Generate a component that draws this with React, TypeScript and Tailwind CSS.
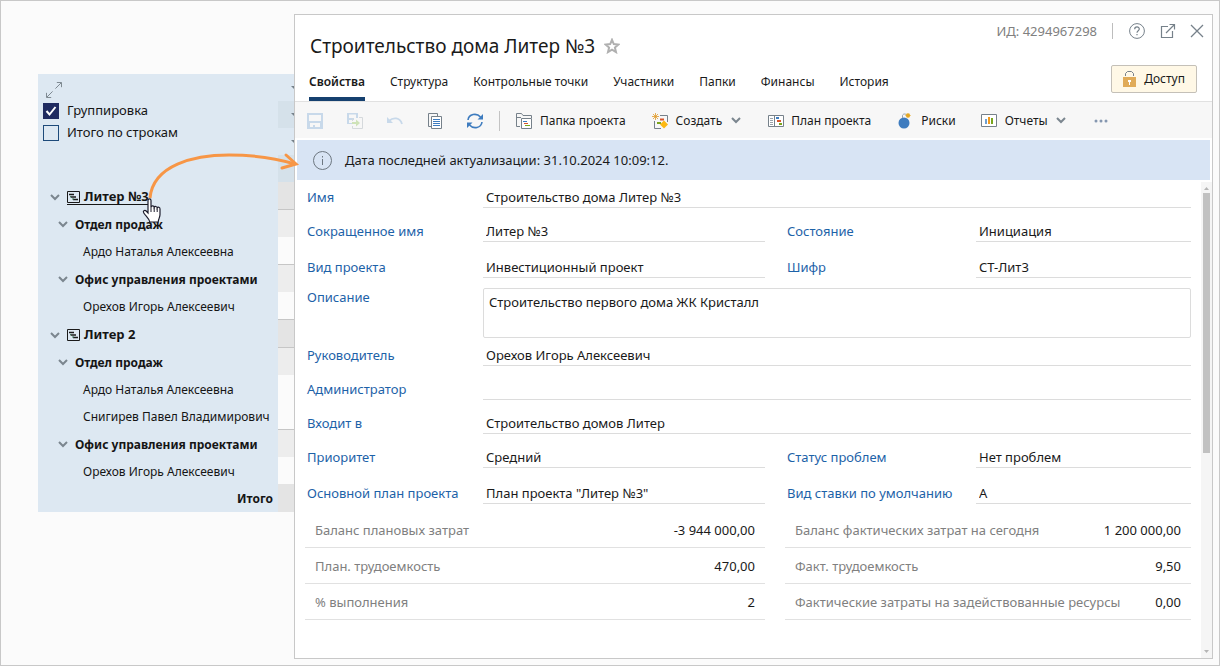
import React, { useId, useState } from "react";
import clsx from "clsx";

interface TreeRow {
  label: string;
  kind: "project" | "dept" | "person" | "total";
  active?: boolean;
  line?: boolean;
}

interface FieldProps {
  label: string;
  value: string;
  wide?: boolean;
  right?: boolean;
}

const treeRows: TreeRow[] = [
  { label: "Литер №3", kind: "project", active: true, line: true },
  { label: "Отдел продаж", kind: "dept" },
  { label: "Ардо Наталья Алексеевна", kind: "person", line: true },
  { label: "Офис управления проектами", kind: "dept" },
  { label: "Орехов Игорь Алексеевич", kind: "person", line: true },
  { label: "Литер 2", kind: "project", line: true },
  { label: "Отдел продаж", kind: "dept" },
  { label: "Ардо Наталья Алексеевна", kind: "person" },
  { label: "Снигирев Павел Владимирович", kind: "person", line: true },
  { label: "Офис управления проектами", kind: "dept" },
  { label: "Орехов Игорь Алексеевич", kind: "person" },
  { label: "Итого", kind: "total" },
];

const tabs = [
  "Свойства",
  "Структура",
  "Контрольные точки",
  "Участники",
  "Папки",
  "Финансы",
  "История",
];

const planMetrics = [
  ["Баланс плановых затрат", "-3 944 000,00"],
  ["План. трудоемкость", "470,00"],
  ["% выполнения", "2"],
];

const factMetrics = [
  ["Баланс фактических затрат на сегодня", "1 200 000,00"],
  ["Факт. трудоемкость", "9,50"],
  ["Фактические затраты на задействованные ресурсы", "0,00"],
];

const cellColor = {
  project: "bg-[#e4e4e4]",
  dept: "bg-[#ededed]",
  person: "bg-[#fbfbfb]",
  total: "bg-[#e4e4e4]",
};

const Chevron = () => (
  <svg width="10" height="7" viewBox="0 0 10 7" fill="none" className="shrink-0">
    <path d="M1 1l4 4 4-4" stroke="#7b868f" strokeWidth="2" />
  </svg>
);

const ProjectIcon = () => (
  <svg width="13" height="12" viewBox="0 0 13 12" fill="none" className="shrink-0">
    <path d="M.5.5h12v11H.5z" stroke="#1a1a1a" />
    <path d="M2 3.5h5M4 6h5M6 8.5h5" stroke="#1a1a1a" strokeWidth="1.6" />
    <path d="M3.5 5v1.500M6 7v2" stroke="#3f7d5c" />
  </svg>
);

const Check = ({ label, initial }: { label: string; initial: boolean }) => {
  const [on, setOn] = useState(initial);

  return (
    <label className="flex h-[22px] items-center gap-2">
      <span className="relative size-4">
        <input
          type="checkbox"
          checked={on}
          onChange={() => setOn(!on)}
          className="block size-4 appearance-none border border-[#1d4a7a] checked:border-[#1f2b60] checked:bg-[#1f2b60]"
        />
        {on && (
          <svg viewBox="0 0 16 16" fill="none" className="pointer-events-none absolute inset-0">
            <path d="M3.5 8l3 3.5 6-7.5" stroke="#fff" strokeWidth="2" />
          </svg>
        )}
      </span>
      {label}
    </label>
  );
};

const Tree = () => (
  <aside className="w-64 shrink-0 text-[12px] text-[#151515]">
    <div className="flex h-[108px]">
      <div className="w-60 bg-[#dde8f2] pt-2 pl-[5px] text-[13px]">
        <button className="mb-0.5 block pl-[3px]" aria-label="Развернуть">
          <svg width="16" height="16" viewBox="0 0 17 17" fill="none" stroke="#76818a">
            <path d="M10 7l6-6M11.5.5h5v5M7 10l-6 6M.5 11.5v5h5" />
          </svg>
        </button>
        <Check label="Группировка" initial={true} />
        <Check label="Итого по строкам" initial={false} />
      </div>
      <div className="w-4">
        {[0, 1, 2, 3].map((i) => (
          <div
            key={i}
            className={clsx(
              "flex h-[27px] items-center justify-end",
              i % 2 ? "bg-[#d5e1ea]" : "bg-[#dde8f2]"
            )}
          >
            {i < 3 && (
              <svg width="3" height="4" viewBox="0 0 3 4">
                <path d="M0 0h3v3z" fill="#76818a" />
              </svg>
            )}
          </div>
        ))}
      </div>
    </div>
    <ul>
      {treeRows.map((row, i) => (
        <li
          key={i}
          className={clsx(
            "flex whitespace-nowrap",
            row.line || row.kind === "total" ? "h-7" : "h-[27px]"
          )}
        >
          <div
            className={clsx(
              "flex w-60 items-center bg-[#dde8f2] pt-0.5",
              row.kind === "project" && "gap-[7px] pl-3 text-[13px] font-bold",
              row.kind === "dept" && "gap-[7px] pl-5 font-bold",
              row.kind === "person" && "pl-[45px]",
              row.kind === "total" && "justify-end pr-[5px] font-bold"
            )}
          >
            {(row.kind === "project" || row.kind === "dept") && <Chevron />}
            {row.kind === "project" ? (
              <a
                href="#"
                className={clsx(
                  "flex h-4 items-center gap-1",
                  row.active && "border-b border-[#151515]"
                )}
              >
                <ProjectIcon />
                {row.label}
              </a>
            ) : (
              <span>{row.label}</span>
            )}
          </div>
          <div
            className={clsx("w-4", cellColor[row.kind], row.line && "border-b border-[#c6c6c6]")}
          />
        </li>
      ))}
    </ul>
  </aside>
);

const Header = () => {
  const [tab, setTab] = useState(tabs[0]);

  return (
    <header className="flex h-[87px] justify-between border-b border-[#e1e1e1] pr-2 pl-[14px]">
      <div className="flex flex-col justify-end whitespace-nowrap">
        <div className="flex h-[30px] items-center gap-[9px] pl-px">
          <h1 className="text-[19px] text-[#1a1a1a]">Строительство дома Литер №3</h1>
          <button aria-label="В избранное">
            <svg width="16" height="16" viewBox="0 0 16 16" fill="none">
              <path
                d="M8 1.8l1.8 4.3 4.6.4-3.5 3 1.1 4.6L8 11.7l-4 2.4 1.1-4.6-3.5-3 4.6-.4z"
                stroke="#b0b0b0"
                strokeWidth="2"
              />
            </svg>
          </button>
        </div>
        <nav className="flex h-10 gap-[25px] text-[12px] text-[#1a1a1a]">
          {tabs.map((t) => (
            <button
              key={t}
              onClick={() => setTab(t)}
              className={clsx(
                "border-b-4 pt-1.5",
                t === tab ? "border-[#15406f] font-semibold" : "border-transparent"
              )}
            >
              {t}
            </button>
          ))}
        </nav>
      </div>
      <div className="flex flex-col items-end">
        <div className="flex h-[31px] items-center text-[13px] whitespace-nowrap text-[#808080]">
          <span className="border-r border-[#bdbdbd] pr-[15px] leading-4">ИД: 4294967298</span>
          <button className="ml-4" aria-label="Справка">
            <svg width="16" height="16" viewBox="0 0 16 16" fill="none" stroke="#76818a">
              <circle cx="8" cy="8" r="7.4" />
              <path d="M5.7 6.2c0-3 4.6-3 4.6-.1 0 1.7-2.3 1.7-2.3 3.6M8 10.9v1.3" strokeWidth="1.2" />
            </svg>
          </button>
          <button className="ml-[15px]" aria-label="Открыть в новом окне">
            <svg width="16" height="16" viewBox="0 0 16 16" fill="none" stroke="#76818a">
              <path d="M8 3.5H1.5v11h11V8M6 10l8.5-8.5M9.5 1.5h5v5" strokeWidth="1.2" />
            </svg>
          </button>
          <button className="ml-[14px]" aria-label="Закрыть">
            <svg width="14" height="14" viewBox="0 0 14 14" stroke="#76818a" strokeWidth="1.3">
              <path d="M1 1l12 12M13 1L1 13" />
            </svg>
          </button>
        </div>
        <button className="mt-[19px] mr-[7px] flex h-7 items-center gap-2 rounded-xs border border-[#c4c0b8] bg-[#fff8e6] px-[11px] text-[12px] text-[#1a1a1a]">
          <svg width="13" height="16" viewBox="0 0 13 16" fill="none">
            <path d="M2.5 5V2.5l2-2h4l2 2V5" stroke="#76818a" />
            <path d="M0 6h13v10H0z" fill="#e0ab58" />
            <path d="M5 9h3v2H7v3H6v-3H5z" fill="#fff" />
          </svg>
          Доступ
        </button>
      </div>
    </header>
  );
};

const Toolbar = () => (
  <div className="flex h-9 items-center bg-[#f7f7f7] pt-px pl-3 text-[12px] whitespace-nowrap text-[#1a1a1a]">
    <button aria-label="Сохранить">
      <svg width="16" height="16" viewBox="0 0 16 16">
        <path d="M0 0h16v16H0zM2 2v6h12V2zM3 10v4h3v-2h2v2h5v-4z" fill="#c8d9ea" fillRule="evenodd" />
      </svg>
    </button>
    <button className="ml-6" aria-label="Сохранить и закрыть">
      <svg width="16" height="16" viewBox="0 0 16 16" fill="none">
        <path d="M0 0h11v5H9V1.5H2V5h5v2H2v3h3v1H0z" fill="#c8d9ea" />
        <path d="M12 4.5h3.5v11h-10V13M5.5 8V5.5" stroke="#d5d9dc" />
        <path d="M5 9h4V6.5l4 3.5-4 3.5V11H5z" fill="#cfe3b8" />
      </svg>
    </button>
    <button className="ml-6" aria-label="Отменить">
      <svg width="16" height="16" viewBox="0 0 16 16" fill="none">
        <path d="M2 8c4-4 11-4 13 3" stroke="#c8d9ea" strokeWidth="1.8" />
        <path d="M0 4v6h6z" fill="#c8d9ea" />
      </svg>
    </button>
    <button className="ml-6" aria-label="Копировать">
      <svg width="16" height="16" viewBox="0 0 16 16" fill="none">
        <path d="M4 13.5H1.5V.5h9V3" stroke="#76818a" />
        <path d="M4.5 3.5h10v12h-10z" stroke="#76818a" fill="#fff" />
        <path d="M6 6.5h7M6 8.5h7M6 10.5h7M6 12.5h7" stroke="#3e7cbf" />
      </svg>
    </button>
    <button className="ml-6" aria-label="Обновить">
      <svg width="16" height="16" viewBox="0 0 16 16" fill="none">
        <path d="M1 7C1.8 1 9.5-.5 13.5 4M15 9c-.8 6-8.5 7.5-12.5 3" stroke="#3e7cbf" strokeWidth="1.6" />
        <path d="M16 1v5.5h-5.500zM0 15V9.500h5.500z" fill="#3e7cbf" />
      </svg>
    </button>
    <span className="ml-4 h-5 w-px bg-[#c3c3c3]" />
    <button className="ml-4 flex items-center gap-[7px]">
      <svg width="17" height="16" viewBox="0 0 17 16" fill="none">
        <path d="M4 13.5H.5V.5h5l1.5 2h8.5V5M.5 4.5H5" stroke="#76818a" />
        <path d="M5.5 5.5h10v10h-10z" stroke="#76818a" fill="#fff" />
        <path d="M7 8.5h4" stroke="#3e7cbf" />
        <path d="M8 10.5h4" stroke="#d9542b" />
        <path d="M9 12.5h5" stroke="#7aa51d" />
      </svg>
      Папка проекта
    </button>
    <button className="ml-[26px] flex items-center gap-[7px]">
      <svg width="17" height="16" viewBox="0 0 17 16" fill="none">
        <path d="M8 2.5h7.500V9M2.500 8v7.500H9" stroke="#76818a" />
        <path d="M3.5 0v7M0 3.5h7M1 1l5 5M6 1L1 6" stroke="#e09a2b" strokeWidth=".8" />
        <path d="M8 6.5h4" stroke="#d9542b" strokeWidth="2" />
        <path d="M5 10h4" stroke="#7aa51d" strokeWidth="2" />
        <path d="M12 7.500l4 4-4 4-4-4z" fill="#fdb913" />
      </svg>
      Создать
      <span className="pl-0.5">
        <Chevron />
      </span>
    </button>
    <button className="ml-[27px] flex items-center gap-[7px]">
      <svg width="16" height="14" viewBox="0 0 16 14" fill="none">
        <path d="M.5 1.5h15v11H.5zM6.500 1.500v11" stroke="#76818a" fill="#fff" />
        <path d="M2 4.500h3M2 6.500h3M2 8.500h3M2 10.500h3" stroke="#9aa3aa" />
        <path d="M8 4h3" stroke="#3e7cbf" strokeWidth="2" />
        <path d="M9 7h4" stroke="#d9542b" strokeWidth="2" />
        <path d="M11 10h3" stroke="#7aa51d" strokeWidth="2" />
      </svg>
      План проекта
    </button>
    <button className="ml-[27px] flex items-center gap-2">
      <svg width="15" height="16" viewBox="0 0 15 16" fill="none">
        <circle cx="6" cy="10" r="5.5" fill="#3e7cbf" />
        <path d="M4.500 5V2.500C5 .5 8 .5 9 2.500" stroke="#9aa3aa" />
        <path d="M10 0v5M7.500 2.500h5M8.300.8l3.400 3.400M11.700.8L8.300 4.200" stroke="#e5a823" strokeWidth="1.2" />
      </svg>
      Риски
    </button>
    <button className="ml-[25px] flex items-center gap-2">
      <svg width="16" height="14" viewBox="0 0 16 14" fill="none">
        <path d="M.5.5h15v12H.5z" stroke="#76818a" fill="#fff" />
        <path d="M4 5h2v5H4z" fill="#6f9fd0" />
        <path d="M7 3h2v7H7z" fill="#f39a1d" />
        <path d="M10 4h2v6h-2z" fill="#7aa51d" />
      </svg>
      Отчеты
      <Chevron />
    </button>
    <button className="ml-7" aria-label="Ещё">
      <svg width="14" height="4" viewBox="0 0 14 4" fill="#8597b0">
        <circle cx="2" cy="2" r="1.5" />
        <circle cx="7" cy="2" r="1.5" />
        <circle cx="12" cy="2" r="1.5" />
      </svg>
    </button>
  </div>
);

const Field = ({ label, value, wide, right }: FieldProps) => {
  const id = useId();

  return (
    <div className={clsx("flex h-5 min-w-0", wide && "col-span-2")}>
      <label
        htmlFor={id}
        className={clsx(
          "shrink-0 pl-[2px] leading-[19px] whitespace-nowrap text-[#1d62a8]",
          right ? "w-[191px]" : "w-[178px]"
        )}
      >
        {label}
      </label>
      <input
        id={id}
        defaultValue={value}
        className="w-full min-w-0 border-b border-[#dcdcdc] px-[3px] outline-none"
      />
    </div>
  );
};

const Metrics = ({ items }: { items: string[][] }) => (
  <dl>
    {items.map(([name, value]) => (
      <div
        key={name}
        className="flex h-9 items-center justify-between border-b border-[#e1e1e1] px-[10px] pt-[3px] whitespace-nowrap"
      >
        <dt className="text-[#808080]">{name}</dt>
        <dd>{value}</dd>
      </div>
    ))}
  </dl>
);

const columns = "grid grid-cols-[460fr_406fr] gap-x-5";

const Properties = () => (
  <form className="min-w-0 flex-1 pt-[6px] pr-[10px] pl-[10px] text-[13px] text-[#1a1a1a]">
    <div className={clsx(columns, "gap-y-[14px]")}>
      <Field label="Имя" value="Строительство дома Литер №3" wide />
      <Field label="Сокращенное имя" value="Литер №3" />
      <Field label="Состояние" value="Инициация" right />
    </div>
    <div className={clsx(columns, "mt-4")}>
      <Field label="Вид проекта" value="Инвестиционный проект" />
      <Field label="Шифр" value="СТ-Лит3" right />
    </div>
    <div className="mt-[10px] flex">
      <label
        htmlFor="description"
        className="w-[178px] shrink-0 pl-[2px] leading-[19px] text-[#1d62a8]"
      >
        Описание
      </label>
      <textarea
        id="description"
        defaultValue="Строительство первого дома ЖК Кристалл"
        className="h-[50px] w-full resize-none rounded-xs border border-[#dcdcdc] px-[5px] py-1 leading-[19px] outline-none"
      />
    </div>
    <div className={clsx(columns, "mt-2 gap-y-[14px]")}>
      <Field label="Руководитель" value="Орехов Игорь Алексеевич" wide />
      <Field label="Администратор" value="" wide />
      <Field label="Входит в" value="Строительство домов Литер" wide />
      <Field label="Приоритет" value="Средний" />
      <Field label="Статус проблем" value="Нет проблем" right />
    </div>
    <div className={clsx(columns, "mt-4")}>
      <Field label="Основной план проекта" value={'План проекта "Литер №3"'} />
      <Field label="Вид ставки по умолчанию" value="А" right />
    </div>
    <div className={clsx(columns, "mt-2")}>
      <Metrics items={planMetrics} />
      <Metrics items={factMetrics} />
    </div>
  </form>
);

const Scrollbar = () => (
  <div className="flex w-[11px] flex-col items-center bg-[#f5f5f5] py-[5px]">
    <svg width="5" height="3" viewBox="0 0 5 3">
      <path d="M0 3l2.5-3L5 3z" fill="#b5b5b5" />
    </svg>
    <div className="mt-[3px] h-[260px] w-[7px] bg-[#c1c1c1]" />
    <svg width="5" height="3" viewBox="0 0 5 3" className="mt-auto">
      <path d="M0 0l2.5 3L5 0z" fill="#b5b5b5" />
    </svg>
  </div>
);

// Arrow from the clicked tree node to the card, with the hand pointer at its start
const Callout = () => (
  <svg
    width="165"
    height="80"
    viewBox="0 0 165 80"
    fill="none"
    className="pointer-events-none absolute top-[146px] left-[138px]"
  >
    <path d="M11 51C14 18 55 8 90 8c24 0 46 3 66 9" stroke="#f79646" strokeWidth="3" />
    <path d="M147 8l10 9-14 4" stroke="#f79646" strokeWidth="3" strokeLinecap="round" />
    <path
      d="M9 53.5c0-2.200 3-2.200 3 0v6.500c.5-1.500 3-1.500 3.200.3.6-1.300 2.900-1 3 .6.7-1.200 2.800-.8 2.800 1v5.600c0 3-1.500 4-1.800 7.500h-8.400c-.6-3.500-3.800-5.500-6-9-1.300-2 .8-3.400 2.400-2L9 66z"
      fill="#fff"
      stroke="#1c1c2c"
      strokeWidth="1.2"
    />
    <path d="M12 60v5M15.2 60.5V65M18.2 61.5V65" stroke="#1c1c2c" />
  </svg>
);

const App = () => {
  return (
    <div className="relative flex min-h-screen border border-[#c8c8c8] bg-[#fbfbfb] pl-[37px] font-['Noto_Sans','Open_Sans',sans-serif]">
      <div className="pt-[73px]">
        <Tree />
      </div>
      <main className="mt-[13px] mr-[6px] mb-[6px] flex min-w-0 flex-1 flex-col border border-[#c8c8c8] bg-white">
        <Header />
        <Toolbar />
        <div className="mx-[2px] mt-[2px] flex h-10 items-center gap-[13px] bg-[#d8e4f4] pl-4 text-[13px] text-[#1a1a1a]">
          <svg width="19" height="19" viewBox="0 0 19 19" fill="none" stroke="#6d7780">
            <circle cx="9.5" cy="9.5" r="9" />
            <path d="M9.5 8v6M9.5 5v1.5" />
          </svg>
          <span className="pt-0.5">Дата последней актуализации: 31.10.2024 10:09:12.</span>
        </div>
        <div className="mt-[2px] flex flex-1">
          <Properties />
          <Scrollbar />
        </div>
      </main>
      <Callout />
    </div>
  );
};

export default App;
